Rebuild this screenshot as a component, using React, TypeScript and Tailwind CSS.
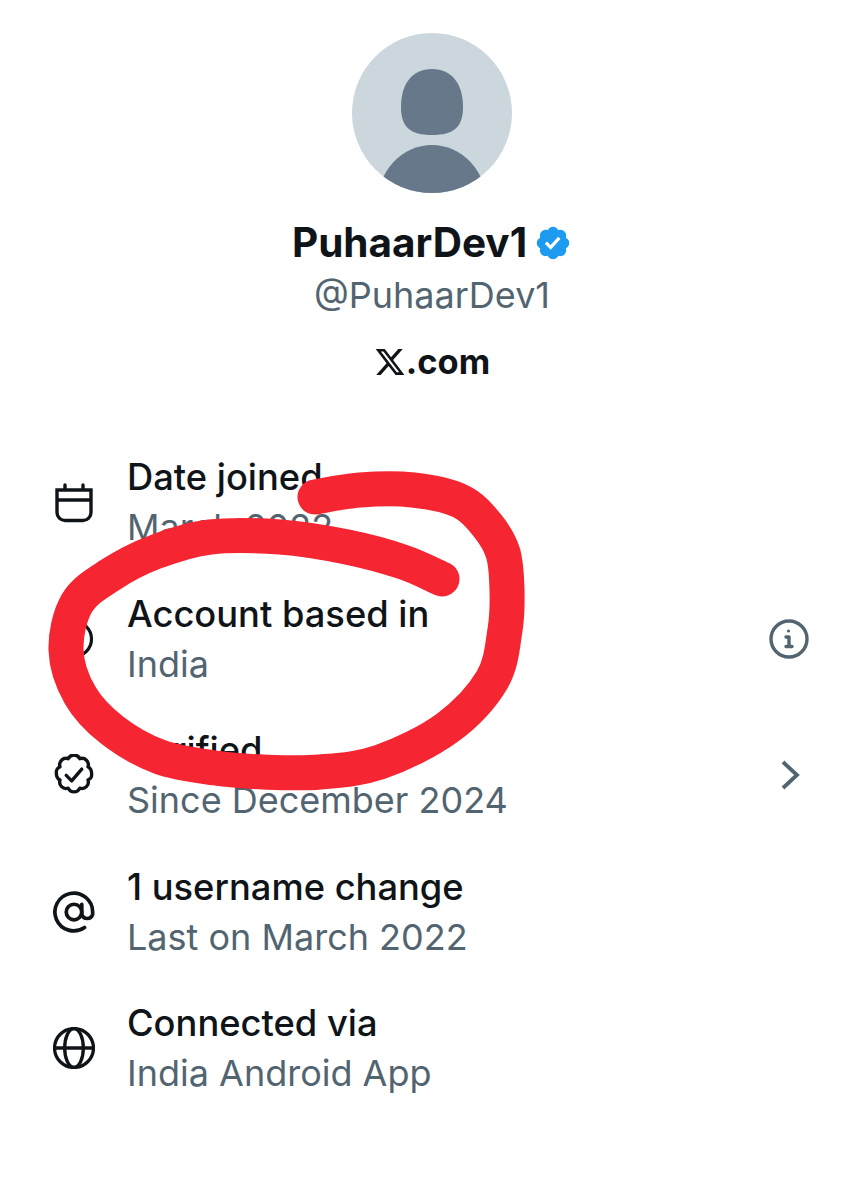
import React from 'react';

const Stroke = () => {
    const pts: [number, number][] = [
        [315, 497], [360, 490], [413, 490], [460, 501], [487, 525], [503, 553], [507, 590], [505, 630], [492, 680],
        [447, 728], [380, 762], [320, 772], [263, 772], [215, 768], [160, 757], [112, 730], [80, 695],
        [66, 650], [77, 603], [110, 575], [155, 552], [210, 537], [280, 537], [347, 547], [403, 562], [442, 579],
    ];
    let d = `M${pts[0][0]} ${pts[0][1]}`;
    for (let i = 0; i < pts.length - 1; i++) {
        const p0 = pts[Math.max(i - 1, 0)];
        const p1 = pts[i];
        const p2 = pts[i + 1];
        const p3 = pts[Math.min(i + 2, pts.length - 1)];
        d += ` C${p1[0] + (p2[0] - p0[0]) / 6} ${p1[1] + (p2[1] - p0[1]) / 6} ${p2[0] - (p3[0] - p1[0]) / 6} ${p2[1] - (p3[1] - p1[1]) / 6} ${p2[0]} ${p2[1]}`;
    }
    return (
        <svg className="absolute left-0 top-0 pointer-events-none" width="864" height="1200" viewBox="0 0 864 1200" fill="none">
            <path d={d} stroke="#f52532" strokeWidth="35" strokeLinecap="round" strokeLinejoin="round" />
        </svg>
    );
};

const iconClass = 'w-[42px] h-[42px] text-[#0f1419]';

const CalendarIcon = () => (
    <svg className={iconClass} viewBox="0 0 42 42" fill="none" stroke="currentColor" strokeWidth="3.4" strokeLinecap="round">
        <path d="M4 9h34v22.5a8 8 0 0 1-8 8H12a8 8 0 0 1-8-8zM4 19h34M12 4v5M30 4v5" />
    </svg>
);

const PinIcon = () => (
    <svg className={iconClass} viewBox="0 0 42 42" fill="none" stroke="currentColor" strokeWidth="3.2">
        <circle cx="21" cy="21" r="17.5" />
    </svg>
);

const VerifiedIcon = () => (
    <svg className={iconClass} viewBox="1.2 1.2 21.6 21.6" fill="none" stroke="currentColor" strokeWidth="1.75" strokeLinecap="round" strokeLinejoin="round">
        <path d="M12 2.1c1.3 0 2.4.8 3 1.9 1.2-.4 2.5-.1 3.4.8.9.9 1.2 2.2.8 3.4 1.1.6 1.9 1.7 1.9 3.8s-.8 2.4-1.9 3c.4 1.2.1 2.5-.8 3.4-.9.9-2.2 1.2-3.4.8-.6 1.1-1.7 1.9-3 1.9s-2.4-.8-3-1.9c-1.2.4-2.5.1-3.4-.8-.9-.9-1.2-2.2-.8-3.4-1.1-.6-1.9-1.7-1.9-3.8s.8-2.4 1.9-3c-.4-1.2-.1-2.5.8-3.4.9-.9 2.2-1.2 3.4-.8.6-1.1 1.7-1.9 3-1.9z" transform="translate(0 -.4)" />
        <path d="M8 12.2l2.8 2.8 5.2-6" />
    </svg>
);

const AtIcon = () => (
    <svg className={iconClass} viewBox="1.2 1.2 21.6 21.6" fill="none" stroke="currentColor" strokeWidth="1.9" strokeLinecap="round">
        <circle cx="12" cy="12" r="4" />
        <path d="M16 8v5.2a2.9 2.9 0 0 0 5.6 0V12a9.7 9.7 0 1 0-4.2 8" />
    </svg>
);

const GlobeIcon = () => (
    <svg className={iconClass} viewBox="1.2 1.2 21.6 21.6" fill="none" stroke="currentColor" strokeWidth="1.7">
        <circle cx="12" cy="12" r="10" />
        <ellipse cx="12" cy="12" rx="4.8" ry="10" />
        <path d="M2 12h20" />
    </svg>
);

const Row = ({ icon, title, sub, right }: { icon: React.ReactNode; title: string; sub: string; right?: React.ReactNode }) => (
    <div className="flex items-center h-[136.5px] pl-[53px] pr-[54px]">
        <div className="w-[74px] shrink-0">{icon}</div>
        <div className="flex-1 min-w-0">
            <div className="text-[36.3px] leading-[50px] font-medium text-[#0f1419] whitespace-nowrap">{title}</div>
            <div className="text-[36px] leading-[50px] text-[#536471] whitespace-nowrap">{sub}</div>
        </div>
        {right}
    </div>
);

export default function App() {
    return (
        <div className="relative w-[864px] h-[1200px] bg-white overflow-hidden font-['Inter',sans-serif]">
            <div className="flex flex-col items-center pt-[33px]">
                <svg className="w-[160px] h-[160px]" viewBox="0 0 160 160">
                    <defs>
                        <clipPath id="avatar-clip">
                            <circle cx="80" cy="80" r="80" />
                        </clipPath>
                    </defs>
                    <circle cx="80" cy="80" r="80" fill="#ccd6dd" />
                    <g clipPath="url(#avatar-clip)" fill="#66788a">
                        <path d="M80 36c20 0 31 15 31 38 0 20-9 28-31 28s-31-8-31-28c0-23 11-38 31-38z" />
                        <ellipse cx="80" cy="172" rx="55" ry="60" />
                    </g>
                </svg>
                <div className="flex items-center h-[50px] mt-[25px]">
                    <span className="text-[40.5px] leading-[50px] font-bold text-[#0f1419]">PuhaarDev1</span>
                    <svg className="w-[38px] h-[38px] ml-[7px]" viewBox="0 0 22 22">
                        <path fill="#1d9bf0" d="M20.396 11c-.018-.646-.215-1.275-.57-1.816-.354-.54-.852-.972-1.438-1.246.223-.607.27-1.264.14-1.897-.131-.634-.437-1.218-.882-1.687-.47-.445-1.053-.75-1.687-.882-.633-.13-1.29-.083-1.897.14-.273-.587-.704-1.086-1.245-1.44S11.647 1.62 11 1.604c-.646.017-1.273.213-1.813.568s-.969.854-1.24 1.44c-.608-.223-1.267-.272-1.902-.14-.635.13-1.22.436-1.69.882-.445.47-.749 1.055-.878 1.688-.13.633-.08 1.29.144 1.896-.587.274-1.087.705-1.443 1.245-.356.54-.555 1.17-.574 1.817.02.647.218 1.276.574 1.817.356.54.856.972 1.443 1.245-.224.606-.274 1.263-.144 1.896.13.634.433 1.218.877 1.688.47.443 1.054.747 1.687.878.633.132 1.29.084 1.897-.136.274.586.705 1.084 1.246 1.439.54.354 1.17.551 1.816.569.647-.016 1.276-.213 1.817-.567s.972-.854 1.245-1.44c.604.239 1.266.296 1.903.164.636-.132 1.22-.447 1.68-.907.46-.46.776-1.044.908-1.681s.075-1.299-.165-1.903c.586-.274 1.084-.705 1.439-1.246.354-.54.551-1.17.569-1.816zM9.662 14.85l-3.429-3.428 1.293-1.302 2.072 2.072 4.4-4.794 1.347 1.246z" />
                    </svg>
                </div>
                <div className="text-[36px] leading-[50px] text-[#536471] mt-[2px]">@PuhaarDev1</div>
                <div className="flex items-center h-[50px] mt-[17px] text-[#0f1419]">
                    <svg className="w-[32px] h-[32px]" viewBox="0 0 24 24" fill="currentColor">
                        <path d="M18.244 2.25h3.308l-7.227 8.26 8.502 11.24H16.17l-5.214-6.817L4.99 21.75H1.68l7.73-8.835L1.254 2.25H8.08l4.713 6.231zm-1.161 17.52h1.833L7.084 4.126H5.117z" />
                    </svg>
                    <span className="text-[34.5px] leading-[50px] font-bold">.com</span>
                </div>
            </div>
            <div className="mt-[47px]">
                <Row icon={<CalendarIcon />} title="Date joined" sub="March 2022" />
                <Row
                    icon={<PinIcon />}
                    title="Account based in"
                    sub="India"
                    right={
                        <svg className="w-[42px] h-[42px] text-[#536471]" viewBox="0 0 42 42" fill="none" stroke="currentColor" strokeWidth="3.4" strokeLinecap="round" strokeLinejoin="round">
                            <circle cx="21" cy="21" r="18" />
                            <circle cx="20.5" cy="13" r="1.6" fill="currentColor" stroke="none" />
                            <path d="M18 19h3v9M18 28.5h6" />
                        </svg>
                    }
                />
                <Row
                    icon={<VerifiedIcon />}
                    title="Verified"
                    sub="Since December 2024"
                    right={
                        <svg className="w-[42px] h-[42px] text-[#536471]" viewBox="0 0 42 42" fill="none" stroke="currentColor" strokeWidth="3.8">
                            <path d="M15 8l14 13-14 13" />
                        </svg>
                    }
                />
                <Row icon={<AtIcon />} title="1 username change" sub="Last on March 2022" />
                <Row icon={<GlobeIcon />} title="Connected via" sub="India Android App" />
            </div>
            <Stroke />
        </div>
    );
}
